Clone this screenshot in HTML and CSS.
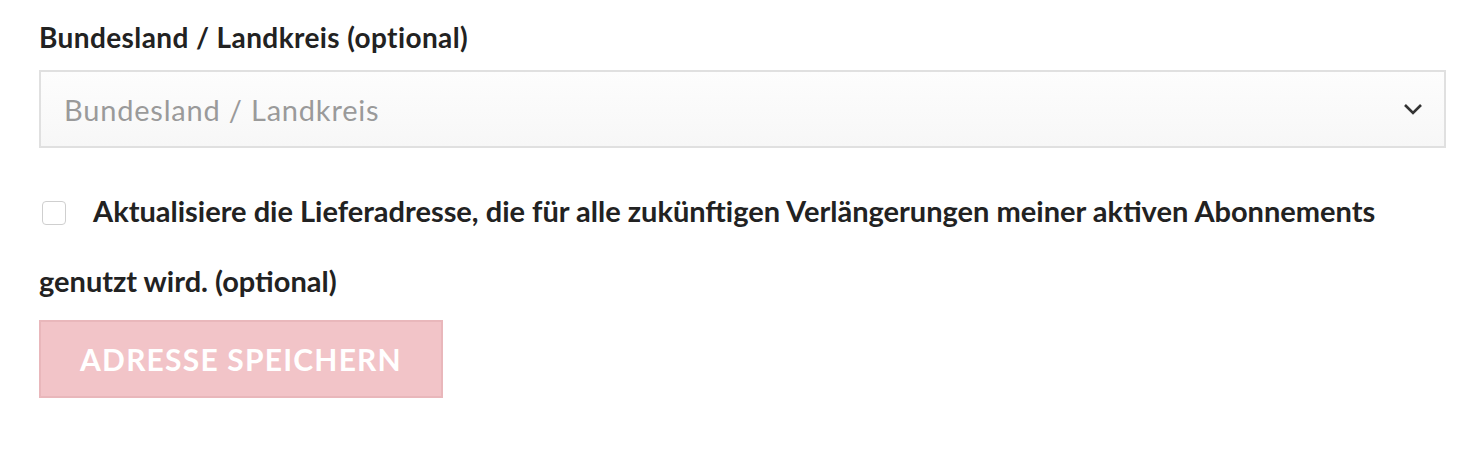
FILE: index.html
```html
<!DOCTYPE html>
<html lang="de">

<head>
    <meta charset="UTF-8">
    <meta name="viewport" content="width=device-width, initial-scale=1.0">
    <title>Adresse</title>
    <link rel="stylesheet" href="styles.css">
</head>

<body>
    <!-- Adressformular -->
    <form class="address-form">
        <div class="field">
            <label class="field-label" for="state">Bundesland / Landkreis (optional)</label>
            <div class="select-box">
                <span class="placeholder">Bundesland / Landkreis</span>
                <svg class="chevron" width="20" height="12" viewBox="0 0 20 12">
                    <path d="M2 2 L10 10 L18 2" fill="none" stroke="#333" stroke-width="2.6" />
                </svg>
            </div>
        </div>

        <p class="check-row">
            <span class="checkbox"></span>
            Aktualisiere die Lieferadresse, die für alle zukünftigen Verlängerungen meiner aktiven Abonnements
            genutzt wird. (optional)
        </p>

        <button type="button" class="save-btn">Adresse speichern</button>
    </form>
</body>

</html>
```

FILE: styles.css
```css
* {
    margin: 0;
    padding: 0;
    box-sizing: border-box;
}

body {
    font-family: Lato, "Open Sans", sans-serif;
    color: #222;
    background: #fff;
}

.address-form {
    padding: 18px 36px 0 39px;
}

.field-label {
    display: block;
    font-size: 28px;
    font-weight: 700;
    letter-spacing: 0.4px;
    line-height: 38px;
    margin-bottom: 14px;
}

.select-box {
    display: flex;
    align-items: center;
    justify-content: space-between;
    width: 1407px;
    height: 78px;
    padding: 0 21px 0 23px;
    border: 2px solid #e0e0e0;
    background: linear-gradient(#fdfdfd, #f7f7f7);
}

.placeholder {
    font-size: 29px;
    letter-spacing: 0.8px;
    color: #9a9a9a;
}

.check-row {
    margin-top: 28px;
    font-size: 29px;
    font-weight: 700;
    line-height: 70px;
}

.checkbox {
    display: inline-block;
    width: 24px;
    height: 24px;
    margin: 0 21px 0 3px;
    vertical-align: -3px;
    border: 1px solid #cfcfcf;
    border-radius: 4px;
    background: #fff;
}

.save-btn {
    display: block;
    margin-top: 4px;
    width: 404px;
    height: 78px;
    font-family: inherit;
    font-size: 30px;
    font-weight: 700;
    letter-spacing: 1.2px;
    text-transform: uppercase;
    color: #fff;
    background-color: #f2c4c8;
    border: 2px solid #e9b7bb;
}
```
